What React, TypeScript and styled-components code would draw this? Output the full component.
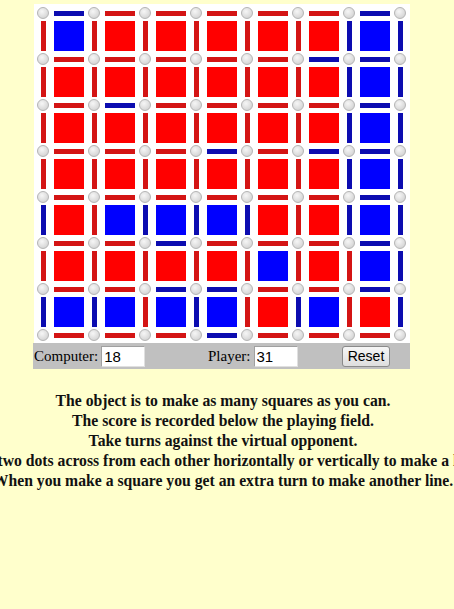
import styled, { createGlobalStyle } from 'styled-components';

const GlobalStyle = createGlobalStyle`
  body {
    margin: 0;
    background: #ffffcc;
    font-family: 'Liberation Serif', 'Times New Roman', serif;
    overflow: hidden;
  }
`;

// R = red (player), B = blue (computer)
const squares = [
  'BRRRRRB',
  'RRRRRRB',
  'RRRRRRB',
  'RRRRRRB',
  'RBBBRRB',
  'RRRRBRB',
  'BBBBRBR',
];

const hLines = [
  'BRRRRRB',
  'RRRRRBB',
  'RBRRRRB',
  'RRRBRBB',
  'RRRRRRB',
  'RRBRRRB',
  'RRBBRRB',
  'RRRBRRR',
];

const vLines = [
  'RRRRRRBB',
  'RRRRRRBB',
  'RRRRRRBB',
  'RRRRRRBB',
  'BRBBBRBB',
  'RRRRRRRB',
  'BBRBRBRB',
];

const colors = {
  R: { square: '#ff0000', line: '#d41414' },
  B: { square: '#0000ff', line: '#0c0cb0' },
};

type Side = 'R' | 'B';

const Page = styled.div`
  padding-top: 4px;
`;

const GameArea = styled.div`
  width: 377px;
  margin-left: 33px;
`;

const Board = styled.div`
  display: grid;
  grid-template-columns: repeat(7, 12px 39px) 12px;
  grid-template-rows: repeat(7, 12px 34px) 12px;
  background: #ffffff;
  padding: 3px 4px 2px 3px;
  margin-left: 1px;
  width: fit-content;
`;

const Dot = styled.div`
  width: 12px;
  height: 12px;
  box-sizing: border-box;
  border-radius: 50%;
  border: 1px solid #b4b4b4;
  background: radial-gradient(circle at 40% 35%, #f6f6f6 0%, #dcdcdc 60%, #c8c8c8 100%);
`;

const Cell = styled.div`
  display: flex;
  align-items: center;
  justify-content: center;
`;

const HLine = styled.div<{ $side: Side }>`
  width: 30px;
  height: 5px;
  margin-left: 1px;
  background: ${(p) => colors[p.$side].line};
`;

const VLine = styled.div<{ $side: Side }>`
  width: 5px;
  height: 30px;
  background: ${(p) => colors[p.$side].line};
`;

const Square = styled.div<{ $side: Side }>`
  width: 30px;
  height: 30px;
  margin-left: 1px;
  background: ${(p) => colors[p.$side].square};
`;

const ScoreBar = styled.div`
  display: flex;
  align-items: center;
  height: 26px;
  background: #c0c0c0;
  font-size: 15px;
  color: #000;
`;

const ScoreGroup = styled.label<{ $width: number }>`
  display: flex;
  align-items: center;
  width: ${(p) => p.$width}px;
  padding-left: 1px;
  box-sizing: border-box;
`;

const ScoreInput = styled.input`
  width: 44px;
  height: 21px;
  box-sizing: border-box;
  margin-left: 3px;
  padding: 1px 2px;
  border: 1px solid #a0a0a0;
  border-right-color: #e0e0e0;
  border-bottom-color: #e0e0e0;
  background: #fff;
  font-family: 'Liberation Sans', Arial, sans-serif;
  font-size: 15px;
  color: #000;
`;

const ResetButton = styled.button`
  width: 48px;
  height: 21px;
  padding: 0;
  border: 1px solid #8a8a8a;
  border-radius: 3px;
  background: linear-gradient(#f6f6f6, #dedede);
  font-family: 'Liberation Sans', Arial, sans-serif;
  font-size: 14px;
  color: #000;
`;

const Instructions = styled.div`
  display: flex;
  flex-direction: column;
  align-items: center;
  margin-top: 22px;
  padding-right: 8px;
  font-weight: bold;
  font-size: 15.7px;
  line-height: 20px;
  color: #111;
`;

const Line = styled.div`
  white-space: nowrap;
`;

function renderBoard() {
  const cells = [];
  for (let r = 0; r < 15; r++) {
    for (let c = 0; c < 15; c++) {
      const key = `${r}-${c}`;
      if (r % 2 === 0 && c % 2 === 0) {
        cells.push(<Cell key={key}><Dot /></Cell>);
      } else if (r % 2 === 0) {
        const side = hLines[r / 2][(c - 1) / 2] as Side;
        cells.push(<Cell key={key}><HLine $side={side} /></Cell>);
      } else if (c % 2 === 0) {
        const side = vLines[(r - 1) / 2][c / 2] as Side;
        cells.push(<Cell key={key}><VLine $side={side} /></Cell>);
      } else {
        const side = squares[(r - 1) / 2][(c - 1) / 2] as Side;
        cells.push(<Cell key={key}><Square $side={side} /></Cell>);
      }
    }
  }
  return cells;
}

export default function App() {
  return (
    <Page>
      <GlobalStyle />
      <GameArea>
        <Board>{renderBoard()}</Board>
        <ScoreBar>
          <ScoreGroup $width={174}>
            Computer:
            <ScoreInput readOnly value="18" />
          </ScoreGroup>
          <ScoreGroup $width={135}>
            Player:
            <ScoreInput readOnly value="31" />
          </ScoreGroup>
          <ResetButton>Reset</ResetButton>
        </ScoreBar>
      </GameArea>
      <Instructions>
        <Line>The object is to make as many squares as you can.</Line>
        <Line>The score is recorded below the playing field.</Line>
        <Line>Take turns against the virtual opponent.</Line>
        <Line>Join two dots across from each other horizontally or vertically to make a line.</Line>
        <Line>When you make a square you get an extra turn to make another line.</Line>
      </Instructions>
    </Page>
  );
}
